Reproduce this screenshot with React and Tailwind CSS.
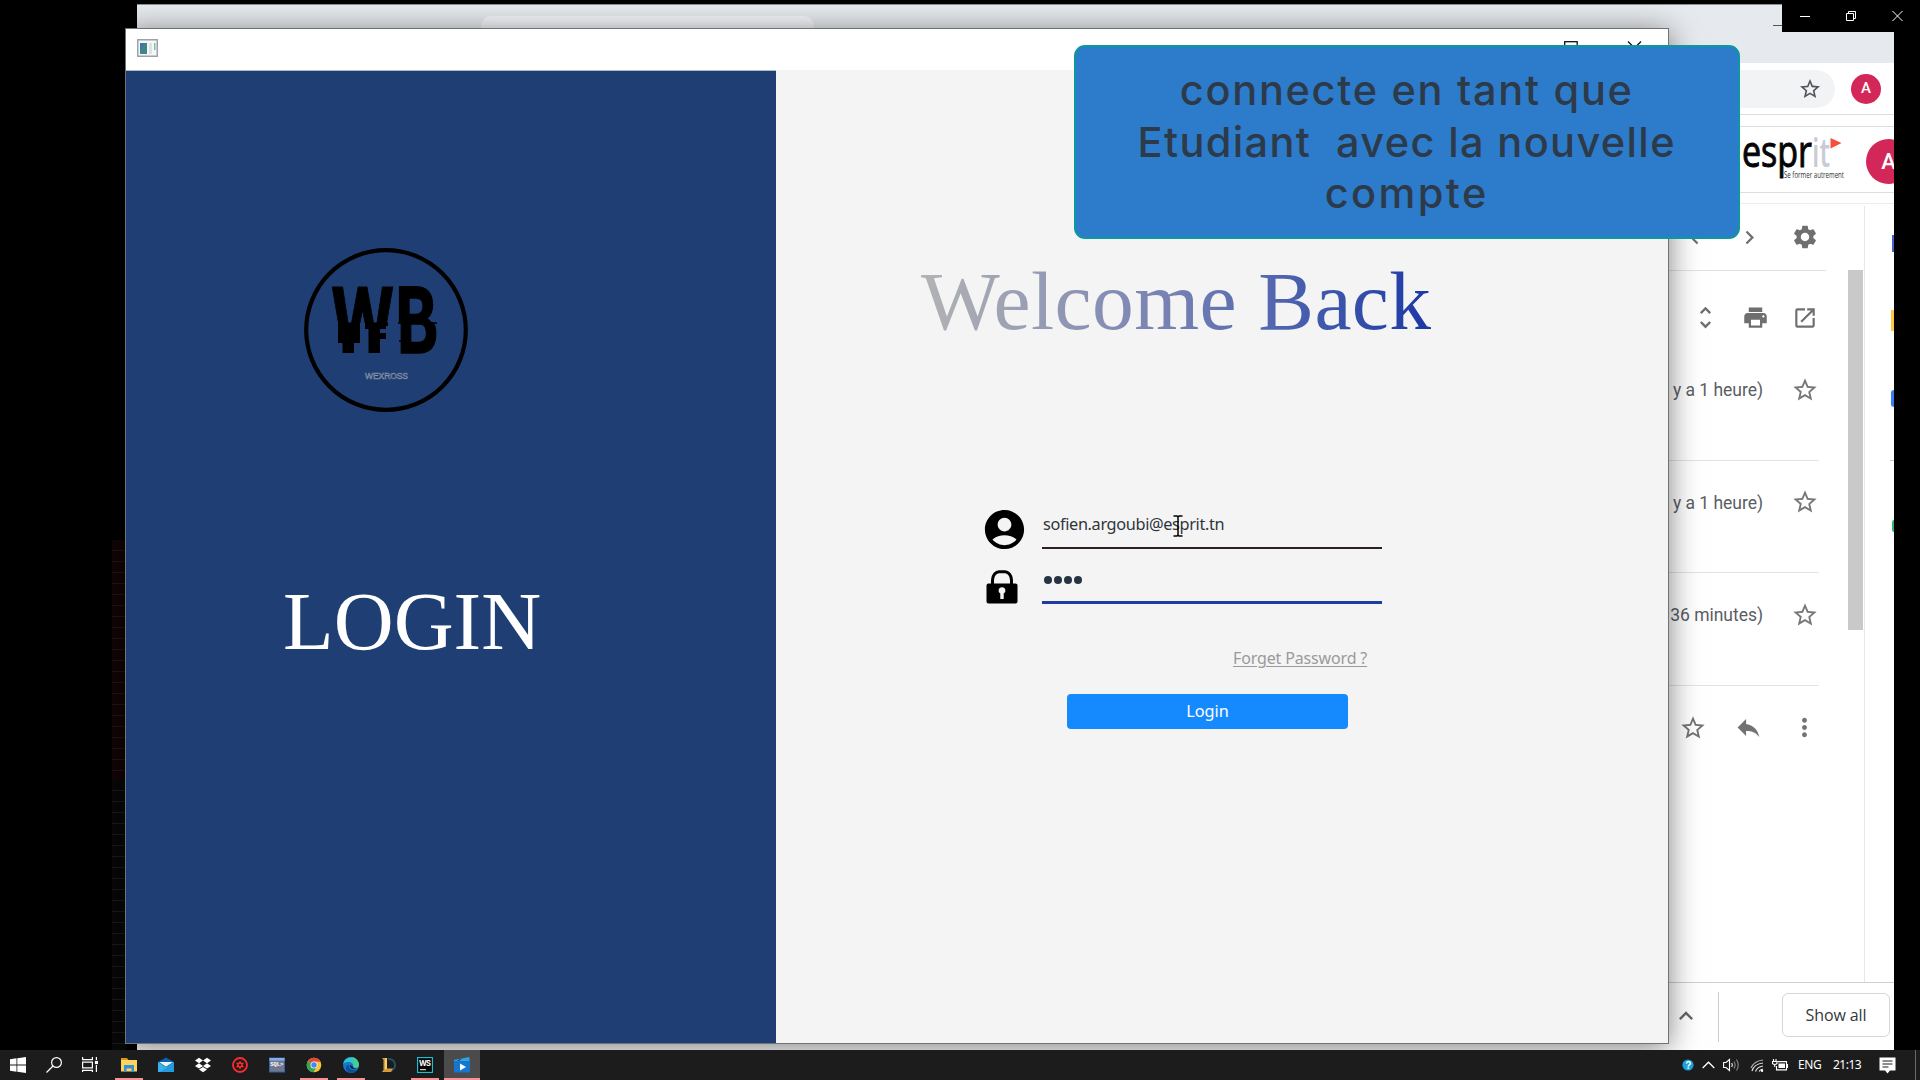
import React from "react";
import {
  MdStarBorder,
  MdPrint,
  MdOpenInNew,
  MdUnfoldMore,
  MdReply,
  MdMoreVert,
  MdSettings,
  MdChevronRight,
  MdChevronLeft,
  MdKeyboardArrowUp,
  MdAccountCircle,
} from "react-icons/md";

/* ---------- Browser window ---------- */

function EspritLogo() {
  return (
    <svg className="mr-[7px] shrink-0 overflow-visible" width="106" height="64" viewBox="0 0 106 64" fontFamily="'Open Sans', sans-serif">
      <text x="1" y="38.500" fontSize="43" fill="#050505" stroke="#050505" strokeWidth="1" textLength="70" lengthAdjust="spacingAndGlyphs">espr</text>
      <text x="71" y="38.500" fontSize="39" fontWeight="600" fill="#c9cbd6" textLength="18" lengthAdjust="spacingAndGlyphs">it</text>
      <path d="M89.500 10L100.500 15L89.500 20.500Z" fill="#f4503c" />
      <text x="43" y="50" fontSize="8.500" fill="#333" textLength="60" lengthAdjust="spacingAndGlyphs">Se former autrement</text>
    </svg>
  );
}

function MailRow({ when }) {
  return (
    <div className="flex h-[112.500px] shrink-0 justify-end border-b border-[#e3e3e3]">
      <span className="mt-[31px] mr-[28px] text-[17.500px] leading-[22px] tracking-[-0.03px] whitespace-nowrap text-[#5a5e63]">{when}</span>
      <MdStarBorder className="mt-[27.500px] size-[28px] text-[#777]" />
    </div>
  );
}

function Browser() {
  return (
    <div className="absolute top-[4px] left-[137px] flex h-[1046px] w-[1757px] flex-col overflow-hidden bg-white font-['Roboto',sans-serif]">
      <div className="flex h-[59px] shrink-0 justify-between border-t border-[#8c8f93] bg-[#e6e9ed]">
        <div className="mt-[11px] ml-[344px] h-[48px] w-[333px] rounded-t-[10px] bg-[#f3f5f8]" />
        <div className="mt-[20px] mr-[112px] h-px w-[9px] bg-[#555]" />
      </div>
      <div className="flex h-[52px] shrink-0 items-center justify-end border-b border-[#dcdde0] pr-[13px]">
        <div className="flex h-[38px] w-[1500px] items-center justify-end rounded-full bg-[#f1f3f4] pr-[13px]">
          <MdStarBorder className="size-[24px] text-[#50545a]" />
        </div>
        <div className="ml-[16px] flex size-[30px] items-center justify-center rounded-full bg-[#d42759] text-[15px] font-medium text-white">A</div>
      </div>
      <div className="mt-[11px] flex h-[67px] shrink-0 items-center justify-end border-y border-[#dcdde0]">
        <EspritLogo />
        <div className="mt-[3px] mr-[-17px] ml-[12px] flex size-[45px] shrink-0 items-center justify-center rounded-full bg-[#d42759] text-[22px] font-medium text-white">A</div>
      </div>
      <div className="mt-[10px] flex h-[780px] shrink-0 justify-end border-y border-t-[#ececec] border-b-[#cfcfcf]">
        <div className="flex w-[225px] flex-col">
          <div className="flex h-[66px] shrink-0 items-center justify-end text-[#6f6f6f]">
            <MdChevronLeft className="size-[27px]" />
            <MdChevronRight className="ml-[28px] size-[27px]" />
            <MdSettings className="mr-[29px] ml-[28px] size-[28px]" />
          </div>
          <div className="mr-[22px] h-px shrink-0 bg-[#e3e3e3]" />
          <div className="flex flex-col pr-[29px]">
            <div className="flex h-[77px] shrink-0 items-center justify-end pt-[16px] pr-[1px] text-[#6f6f6f]">
              <MdUnfoldMore className="size-[29px]" />
              <MdPrint className="ml-[22px] size-[27px]" />
              <MdOpenInNew className="ml-[23px] size-[26px]" />
            </div>
            <MailRow when="(il y a 1 heure)" />
            <MailRow when="(il y a 1 heure)" />
            <MailRow when="(il y a 36 minutes)" />
            <div className="flex h-[84px] items-center justify-end text-[#737373]">
              <MdStarBorder className="size-[28px]" />
              <MdReply className="ml-[27px] size-[29px]" />
              <MdMoreVert className="ml-[27px] size-[29px]" />
            </div>
          </div>
        </div>
        <div className="mt-[66px] h-[360px] w-[15px] bg-[#c9c9c9]" />
        <div className="mt-[2px] ml-[1px] flex w-[30px] flex-col items-end border-l border-[#e8e8e8]">
          <div className="mt-[29px] h-[17px] w-[2px] bg-[#4763d0]" />
          <div className="mt-[58px] h-[21px] w-[3px] bg-[#fbc94a]" />
          <div className="mt-[59px] h-[17px] w-[3px] rounded-l-full bg-[#3b7cf0]" />
          <div className="mt-[53px] h-px w-[4px] bg-[#c8c8c8]" />
          <div className="mt-[59px] h-[12px] w-[2px] rounded-l bg-[#2fb673]" />
        </div>
      </div>
      <div className="flex h-[66px] shrink-0 justify-end pr-[4px]">
        <MdKeyboardArrowUp className="mt-[19px] mr-[-1px] size-[28px] text-[#666]" />
        <div className="mt-[9px] ml-[19px] h-[50px] w-px bg-[#ccc]" />
        <div className="mt-[10px] ml-[63px] flex h-[44px] w-[108px] items-center justify-center rounded-[6px] border border-[#d5d7da] font-['Open_Sans',sans-serif] text-[16px] tracking-[-0.1px] text-[#33373c]">
          Show all
        </div>
      </div>
    </div>
  );
}

/* ---------- Login application ---------- */

function BrandMark() {
  return (
    <svg className="size-[166px]" viewBox="0 0 166 166">
      <defs>
        <clipPath id="upper"><rect x="0" y="0" width="166" height="76" /></clipPath>
        <clipPath id="lower"><rect x="0" y="75.500" width="166" height="60" /></clipPath>
      </defs>
      <circle cx="83" cy="83" r="79.800" fill="none" stroke="#000" strokeWidth="4.200" />
      <g fontFamily="Roboto, sans-serif" fontWeight="700" fontSize="92">
        <g clipPath="url(#upper)">
          <text x="28" y="106" textLength="63" lengthAdjust="spacingAndGlyphs" stroke="#000" strokeWidth="1">W</text>
          <text x="92.500" y="106" textLength="41" lengthAdjust="spacingAndGlyphs" stroke="#000" strokeWidth="2">B</text>
        </g>
        <g clipPath="url(#lower)">
          <text x="94" y="106" textLength="42" lengthAdjust="spacingAndGlyphs" stroke="#000" strokeWidth="1.500">B</text>
        </g>
      </g>
      <path d="M35 75.500H57V96H51V106H39.500V96H35ZM62 75.500H85V79H83V82H77V86H83V92H77V106H65.500V82H62Z" />
      <path d="M95 76H134M96 94H104" stroke="#000" strokeWidth="1.500" />
      <text x="62" y="131.500" fontFamily="'Liberation Sans', sans-serif" fontSize="8.500" fill="#1f3f74" stroke="#8d97a8" strokeWidth="0.500" textLength="43">WEXROSS</text>
    </svg>
  );
}

function Padlock() {
  return (
    <svg className="h-[34px] w-[32px]" viewBox="0 0 32 34">
      <path d="M6.500 15V10C6.500 5 10 1.700 13 1.700H19C22 1.700 25.500 5 25.500 10V15" fill="none" stroke="#000" strokeWidth="3" />
      <rect x="0.500" y="13.500" width="31" height="20" rx="2" />
      <path d="M16 17.200a3.300 3.300 0 0 1 1.700 6.200V29h-3.400v-5.600A3.300 3.300 0 0 1 16 17.200Z" fill="#f4f4f4" />
    </svg>
  );
}

function LoginWindow() {
  return (
    <div className="absolute top-[28px] left-[125px] flex h-[1016px] w-[1544px] flex-col border border-[#707274] bg-[#f4f4f4] shadow-[0_4px_28px_rgba(0,0,0,0.5)]">
      <div className="flex h-[41px] shrink-0 justify-between bg-white pr-[26px] pl-[11px]">
        <svg className="mt-[10px] h-[18px] w-[21px]" viewBox="0 0 21 18">
          <rect x="0.750" y="0.750" width="19.500" height="16.500" fill="#f5f8f8" stroke="#9ba3a8" strokeWidth="1.500" />
          <rect x="3" y="4" width="7" height="11" fill="#44858c" />
          <path d="M3 4h5l-5 8z" fill="#3f75a8" />
          <rect x="12" y="4" width="3" height="11" fill="#dde5e4" />
          <rect x="17" y="4" width="1.500" height="7" fill="#8ab8aa" />
        </svg>
        <svg className="mt-[12px] h-[14px] w-[78px]" viewBox="0 0 78 14" fill="none" stroke="#111" strokeWidth="1.300">
          <rect x="0.700" y="0.700" width="12.500" height="12.500" />
          <path d="M64 0.500L77 13.500M77 0.500L64 13.500" />
        </svg>
      </div>
      <div className="flex min-h-0 flex-1">
        <div className="flex w-[650px] shrink-0 flex-col items-start border-t border-[#a6bccb] bg-[#1f3f74]">
          <div className="mt-[176px] ml-[177px]"><BrandMark /></div>
          <div className="mt-[161px] ml-[157px] font-['Liberation_Serif',serif] text-[83px] leading-[95px] whitespace-nowrap text-white">LOGIN</div>
        </div>
        <div className="flex flex-1 flex-col items-start">
          <div className="mt-[183px] ml-[145px] bg-linear-to-r from-[#b3b3b3] via-[#7580b3] to-[#1c37a5] bg-clip-text font-['Liberation_Serif',serif] text-[83.500px] leading-[96px] tracking-[0.4px] whitespace-nowrap text-transparent">Welcome Back</div>
          <div className="mt-[156px] ml-[205px] flex items-start font-['Noto_Sans',sans-serif]">
            <MdAccountCircle className="mt-[0.500px] size-[47px] text-black" />
            <div className="relative ml-[14px] flex h-[43.500px] w-[340px] border-b-2 border-[#2b2121] pt-[9px] pl-[1px]">
              <span className="text-[16.300px] leading-[20px] tracking-[-0.350px] text-[#30343c]">sofien.argoubi@esprit.tn</span>
              <svg className="absolute top-[10px] left-[131px] h-[22px] w-[10px]" viewBox="0 0 10 22" fill="none" stroke="#000" strokeWidth="1.500">
                <path d="M0.500 1H4L5 2L6 1H9.500M5 2V20M0.500 21H4L5 20L6 21H9.500" />
              </svg>
            </div>
          </div>
          <div className="mt-[17px] ml-[210px] flex items-end">
            <Padlock />
            <div className="ml-[24px] flex h-[34px] w-[340px] items-center gap-[2px] border-b-[3px] border-[#1e3ca4] pb-[11px] pl-[2px]">
              <i className="size-[8px] rounded-full bg-[#263342]" />
              <i className="size-[8px] rounded-full bg-[#263342]" />
              <i className="size-[8px] rounded-full bg-[#263342]" />
              <i className="size-[8px] rounded-full bg-[#263342]" />
            </div>
          </div>
          <div className="mt-[43.500px] ml-[457px] font-['Noto_Sans',sans-serif] text-[16px] leading-[22px] tracking-[-0.150px] whitespace-nowrap text-[#9a9a9a] underline underline-offset-2">Forget Password ?</div>
          <div className="mt-[25px] ml-[291px] flex h-[35px] w-[281px] items-center justify-center rounded-[4px] bg-[#158aff] font-['Noto_Sans',sans-serif] text-[16.300px] text-white">Login</div>
        </div>
      </div>
    </div>
  );
}

/* ---------- Caption over the desktop ---------- */

function Caption() {
  return (
    <div className="absolute top-[45px] left-[1074px] flex h-[193.500px] w-[665.500px] flex-col items-center rounded-[11px] border-[2px] border-[#0e979f] bg-[#2d7ccb] pt-[18px] font-['Inter',sans-serif] text-[41.500px] leading-[51.500px] font-medium text-[#2d3a49]">
      <div className="tracking-[1.7px] whitespace-pre">connecte en tant que</div>
      <div className="tracking-[1.35px] whitespace-pre">Etudiant  avec la nouvelle</div>
      <div className="tracking-[2.4px] whitespace-pre">compte</div>
    </div>
  );
}

/* ---------- Taskbar ---------- */

const icon = "size-[16px]";

const StartIcon = () => (
  <svg className={icon} viewBox="0 0 16 16" fill="#fff"><path d="M0 2.300L6.500 1.300V7.600H0ZM7.300 1.200L16 0V7.600H7.300ZM0 8.400H6.500V14.700L0 13.700ZM7.300 8.400H16V16L7.300 14.800Z" /></svg>
);
const SearchIcon = () => (
  <svg className={icon} viewBox="0 0 16 16" fill="none" stroke="#fff" strokeWidth="1.200"><circle cx="10.500" cy="5.500" r="4.900" /><path d="M7 9L0.500 15.500" /></svg>
);
const TaskViewIcon = () => (
  <svg className={icon} viewBox="0 0 16 16" fill="none" stroke="#fff" strokeWidth="1.200">
    <path d="M0.600 0V2.600H10.400V0M0.600 5.100H10.400V10.900H0.600ZM0.600 15V13.400H10.400V15M14.400 0V3M14.400 8V15" /><rect x="13.500" y="4.500" width="2" height="2" fill="#fff" />
  </svg>
);
const FolderIcon = () => (
  <svg className={icon} viewBox="0 0 16 16"><path d="M0 1h6l1.500 2H0z" fill="#d99a10" /><path d="M0 3h16v11.500H0z" fill="#fcd462" /><path d="M3 8h10v7h-2.500v-3.500h-5V15H3z" fill="#3b8ed6" /></svg>
);
const MailIcon = () => (
  <svg className={icon} viewBox="0 0 16 16"><path d="M0 5L8 0.500L16 5V8H0Z" fill="#0d5fb0" /><path d="M0 5.200V15H16V5.200L8 10Z" fill="#36b2ec" /><path d="M1 5H15L8 9.700Z" fill="#e9f2fb" /><path d="M16 5.200V15H2Z" fill="#1d92dc" opacity="0.700" /></svg>
);
const DropboxIcon = () => (
  <svg className={icon} viewBox="0 0 16 16" fill="#fff"><path d="M4 0.800L8 3.500L4 6.200L0 3.500ZM12 0.800L16 3.500L12 6.200L8 3.500ZM4 6.200L8 8.900L4 11.600L0 8.900ZM12 6.200L16 8.900L12 11.600L8 8.900ZM8 9.900L12 12.500L8 15.200L4 12.500Z" /></svg>
);
const RecorderIcon = () => (
  <svg className={icon} viewBox="0 0 16 16"><circle cx="8" cy="8" r="7" fill="none" stroke="#fa2d2d" strokeWidth="1.800" /><path d="M8 3.500L9.300 5.700L12 5.700L10.600 8L12 10.300H9.300L8 12.500L6.700 10.300H4L5.400 8L4 5.700H6.700Z" fill="#fa2d2d" /><circle cx="8" cy="8" r="1.300" fill="#2a1010" /></svg>
);
const SqlIcon = () => (
  <svg className={icon} viewBox="0 0 16 16"><rect x="0.500" y="1" width="15" height="14" fill="#70798c" stroke="#3560ad" /><rect x="0.500" y="1" width="15" height="2.500" fill="#86abf0" /><text x="1.200" y="9.300" fontSize="5.500" fontWeight="700" fontFamily="'Liberation Mono', monospace" fill="#fff">SQL&gt;</text></svg>
);
const ChromeIcon = () => (
  <svg className={icon} viewBox="0 0 16 16"><circle cx="8" cy="8" r="7.300" fill="#f9c332" /><path d="M8 8L1.700 4.300A7.300 7.300 0 0 1 14.500 4.700H8Z" fill="#dd4b3e" /><path d="M1.700 4.300A7.300 7.300 0 0 0 7.500 15.300L10.600 10L8 8Z" fill="#35a555" /><circle cx="8" cy="8" r="3.500" fill="#f2f2f2" /><circle cx="8" cy="8" r="2.700" fill="#4487ef" /></svg>
);
const EdgeIcon = () => (
  <svg className={icon} viewBox="0 0 16 16"><circle cx="8" cy="8" r="8" fill="#1478cb" /><path d="M0.100 7A8 8 0 0 1 16 8C16 11 12 11.500 10 10C11.500 6 5 3 0.100 7Z" fill="#33c2cf" /><path d="M9 0.100A8 8 0 0 1 16 8C16 11 12 11.500 10 10C11 7 11 3 9 0.100Z" fill="#4ed17a" opacity="0.750" /><path d="M6 8C5 12 9 14 14.500 12.500C11 18 3 16 3 11C3 9 4 8 6 8Z" fill="#0c4f9c" /><path d="M7 8C6.500 11 10 13 14.700 11.600C12 12 9.800 11 10 9.500Z" fill="#1d1d1d" /></svg>
);
const LeagueIcon = () => (
  <svg className={icon} viewBox="0 0 16 16"><path d="M8 2A6 6 0 0 1 10 14" stroke="#1f5063" strokeWidth="2" fill="none" /><path d="M2 1H7V11.500H13L11 15H2L3.500 13V3Z" fill="#d49a3c" /><path d="M5 1H7V12H5Z" fill="#f5cf72" /></svg>
);
const WebStormIcon = () => (
  <svg className={icon} viewBox="0 0 16 16"><rect x="0.600" y="0.600" width="14.800" height="14.800" fill="#050505" stroke="#1cc8e0" strokeWidth="1.100" /><text x="2" y="8.800" fontSize="7.500" fontWeight="700" fontFamily="Inter, sans-serif" fill="#fff" textLength="12">WS</text><path d="M3 12.700H9" stroke="#fff" /></svg>
);
const VideoIcon = () => (
  <svg className={icon} viewBox="0 0 16 16"><path d="M0 3L15.500 0V4H0Z" fill="#2ba7e2" /><path d="M0 4H16V15.500H0Z" fill="#1675cf" /><path d="M3 3.700L6 1.900L8 1.500L5 4Z" fill="#0b4a92" /><path d="M6 6.500V13.500L12 10Z" fill="#fff" /></svg>
);

const apps = [
  { id: "files", Icon: FolderIcon, state: "open" },
  { id: "mail", Icon: MailIcon },
  { id: "dropbox", Icon: DropboxIcon },
  { id: "recorder", Icon: RecorderIcon },
  { id: "sql", Icon: SqlIcon },
  { id: "chrome", Icon: ChromeIcon, state: "open" },
  { id: "edge", Icon: EdgeIcon, state: "open" },
  { id: "league", Icon: LeagueIcon },
  { id: "webstorm", Icon: WebStormIcon, state: "open" },
  { id: "video", Icon: VideoIcon, state: "active" },
];

function Taskbar() {
  return (
    <div className="absolute inset-x-0 bottom-0 flex h-[30px] items-stretch justify-between bg-[#1c1c1c]">
      <div className="flex">
        {[StartIcon, SearchIcon, TaskViewIcon].map((Icon, i) => (
          <div key={i} className="flex w-[36px] items-center justify-center"><Icon /></div>
        ))}
        <div className="ml-[3px] flex gap-px">
          {apps.map(({ id, Icon, state }) => (
            <div key={id} className={"flex w-[36px] flex-col items-center justify-between pt-[7px] " + (state === "active" ? "bg-[#4b4b4b]" : "")}>
              <Icon />
              {state && <div className={"h-[2px] bg-[#f79297] " + (state === "active" ? "w-full" : "w-[28px]")} />}
            </div>
          ))}
        </div>
      </div>
      <div className="flex items-center font-['Noto_Sans',sans-serif] text-[12px] text-white">
        <svg className="size-[12px]" viewBox="0 0 12 12"><circle cx="6" cy="6" r="5.600" fill="#1ba1dc" /><text x="3.200" y="9.600" fontSize="10" fontWeight="700" fontFamily="'Liberation Sans', sans-serif" fill="#fff">?</text></svg>
        <svg className="ml-[8px] h-[8px] w-[13px]" viewBox="0 0 13 8" fill="none" stroke="#fff" strokeWidth="1.300"><path d="M0.700 7L6.500 1.200L12.300 7" /></svg>
        <svg className="ml-[8px] h-[14px] w-[17px]" viewBox="0 0 17 14" fill="none" stroke="#fff" strokeWidth="1.100"><path d="M0.600 4.500H3L6.500 1.500V12.500L3 9.500H0.600Z" /><path d="M8.700 5Q10 7 8.700 9" /><path d="M11 3.500Q13.200 7 11 10.500M13.500 1.500Q17 7 13.500 12.500" stroke="#888" /></svg>
        <svg className="ml-[10px] h-[13px] w-[14px]" viewBox="0 0 14 13" fill="none" stroke="#ddd" strokeWidth="1.200"><path d="M1 9Q4 2 13 1" stroke="#aaa" /><path d="M2 12Q4 5 13 4M5.500 12.500Q7 8 13 7M9 12.500Q10 10.500 13 10" /><circle cx="12" cy="11.800" r="1.200" fill="#fff" stroke="none" /></svg>
        <svg className="ml-[8px] h-[12px] w-[17px]" viewBox="0 0 17 12" fill="none" stroke="#fff" strokeWidth="1.100"><path d="M5.500 2.600H14.500V10.900H4.500V7M15.500 5V9" /><rect x="6.500" y="4.500" width="6.500" height="4.500" fill="#fff" stroke="none" /><path d="M1.500 0V2.500M4 0V2.500M0.500 2.500H5V4.500Q2.700 6.500 0.500 4.500ZM2.700 5.500V8" /></svg>
        <span className="ml-[9px] w-[24px] tracking-[-0.4px]">ENG</span>
        <span className="ml-[11px] w-[28px] tracking-[-0.5px]">21:13</span>
        <svg className="ml-[18px] h-[17px] w-[17px]" viewBox="0 0 17 17"><path d="M0.500 0.500H16.500V13.500H11L8.500 16.500L6 13.500H0.500Z" fill="#fff" /><path d="M3.500 4H13.500M3.500 7H13.500M3.500 10H9.500" stroke="#1c1c1c" strokeWidth="1" /></svg>
        <div className="mr-[4px] ml-[19px] h-[30px] w-px bg-[#6a6a6a]" />
      </div>
    </div>
  );
}

function PlayerControls() {
  return (
    <div className="absolute top-0 right-0 flex h-[32px] w-[138px] bg-black">
      <svg className="h-[32px] w-[138px]" viewBox="0 0 138 32" fill="none" stroke="#fff" strokeWidth="1">
        <path d="M18 16.500H28M110.500 11L120.500 21M120.500 11L110.500 21" />
        <path d="M64.500 13.500H71.500V20.500H64.500ZM66.500 13.500V11.500H73.500V18.500H71.500" />
      </svg>
    </div>
  );
}

export default function App() {
  return (
    <div className="relative h-[1080px] w-[1920px] overflow-hidden bg-black">
      <div className="absolute top-[540px] left-[112px] h-[510px] w-[14px] bg-[repeating-linear-gradient(to_bottom,#120506_0px,#120506_10px,#2a1113_10px,#2a1113_11px)]" />
      <div className="absolute top-[780px] left-[112px] h-[270px] w-[14px] bg-[repeating-linear-gradient(to_bottom,#080808_0px,#080808_10px,#1b1b1b_10px,#1b1b1b_11px)]" />
      <Browser />
      <LoginWindow />
      <Caption />
      <PlayerControls />
      <Taskbar />
    </div>
  );
}
